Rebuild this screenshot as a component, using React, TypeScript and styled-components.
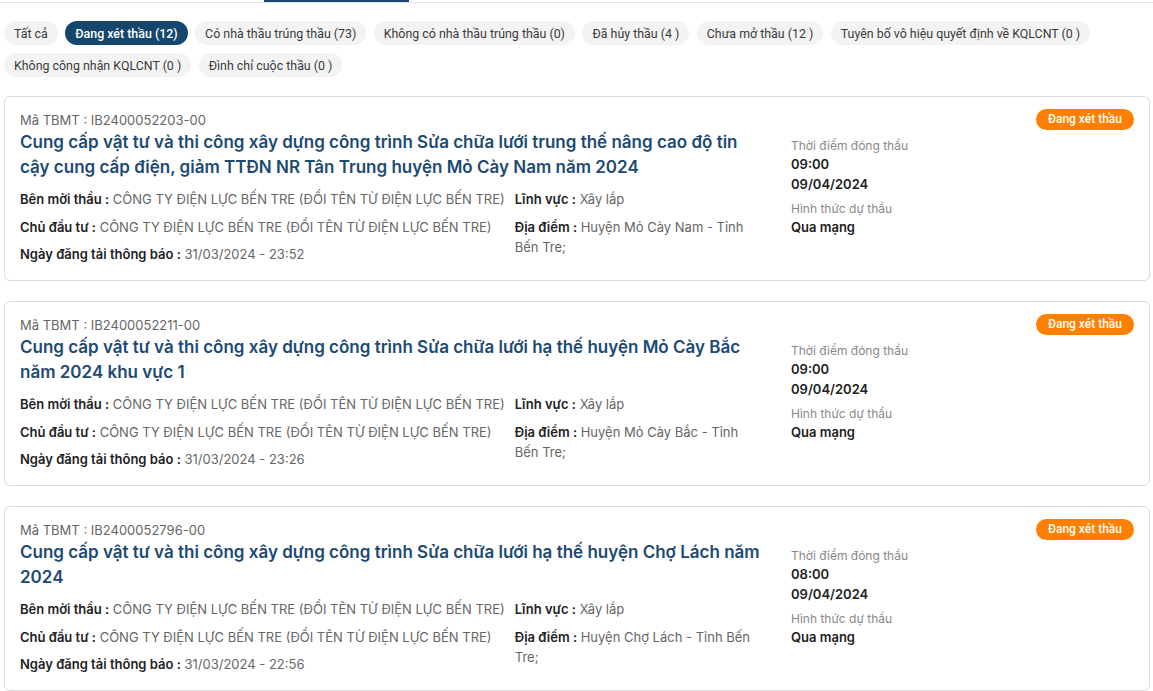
import React from "react";
import styled, { createGlobalStyle } from "styled-components";

const GlobalStyle = createGlobalStyle`
  body {
    margin: 0;
    background: #ffffff;
    font-family: Inter, "Noto Sans", sans-serif;
    color: #222;
  }
`;

type Tender = {
  code: string;
  title: string;
  posted: string;
  place: string;
  closeTime: string;
  closeDate: string;
};

const filters = [
  { label: "Tất cả" },
  { label: "Đang xét thầu (12)", active: true },
  { label: "Có nhà thầu trúng thầu (73)" },
  { label: "Không có nhà thầu trúng thầu (0)" },
  { label: "Đã hủy thầu (4 )" },
  { label: "Chưa mở thầu (12 )" },
  { label: "Tuyên bố vô hiệu quyết định về KQLCNT (0 )" },
  { label: "Không công nhận KQLCNT (0 )" },
  { label: "Đình chỉ cuộc thầu (0 )" },
];

const tenders: Tender[] = [
  {
    code: "IB2400052203-00",
    title:
      "Cung cấp vật tư và thi công xây dựng công trình Sửa chữa lưới trung thế nâng cao độ tin cậy cung cấp điện, giảm TTĐN NR Tân Trung huyện Mỏ Cày Nam năm 2024",
    posted: "31/03/2024 - 23:52",
    place: "Huyện Mỏ Cày Nam - Tỉnh Bến Tre;",
    closeTime: "09:00",
    closeDate: "09/04/2024",
  },
  {
    code: "IB2400052211-00",
    title:
      "Cung cấp vật tư và thi công xây dựng công trình Sửa chữa lưới hạ thế huyện Mỏ Cày Bắc năm 2024 khu vực 1",
    posted: "31/03/2024 - 23:26",
    place: "Huyện Mỏ Cày Bắc - Tỉnh Bến Tre;",
    closeTime: "09:00",
    closeDate: "09/04/2024",
  },
  {
    code: "IB2400052796-00",
    title:
      "Cung cấp vật tư và thi công xây dựng công trình Sửa chữa lưới hạ thế huyện Chợ Lách năm 2024",
    posted: "31/03/2024 - 22:56",
    place: "Huyện Chợ Lách - Tỉnh Bến Tre;",
    closeTime: "08:00",
    closeDate: "09/04/2024",
  },
];

const OWNER = "CÔNG TY ĐIỆN LỰC BẾN TRE (ĐỔI TÊN TỪ ĐIỆN LỰC BẾN TRE)";

const App = () => {
  return (
    <>
      <GlobalStyle />
      <TabStrip>
        <TabUnderline />
      </TabStrip>
      <Page>
        <FilterBar>
          {filters.map((f) => (
            <Chip key={f.label} $active={f.active}>
              {f.label}
            </Chip>
          ))}
        </FilterBar>
        <CardList>
          {tenders.map((t) => (
            <Card key={t.code}>
              <Badge>Đang xét thầu</Badge>
              <Main>
                <Code>Mã TBMT : {t.code}</Code>
                <Title>{t.title}</Title>
                <Fields>
                  <FieldCol>
                    <Field>
                      <Label>Bên mời thầu :</Label> {OWNER}
                    </Field>
                    <Field>
                      <Label>Chủ đầu tư :</Label> {OWNER}
                    </Field>
                    <Field>
                      <Label>Ngày đăng tải thông báo :</Label> {t.posted}
                    </Field>
                  </FieldCol>
                  <FieldCol>
                    <Field>
                      <Label>Lĩnh vực :</Label> Xây lắp
                    </Field>
                    <Field>
                      <Label>Địa điểm :</Label> {t.place}
                    </Field>
                  </FieldCol>
                </Fields>
              </Main>
              <Side>
                <SideLabel>Thời điểm đóng thầu</SideLabel>
                <SideValue>{t.closeTime}</SideValue>
                <SideValue>{t.closeDate}</SideValue>
                <SideLabel $gap>Hình thức dự thầu</SideLabel>
                <SideValue>Qua mạng</SideValue>
              </Side>
            </Card>
          ))}
        </CardList>
      </Page>
    </>
  );
};

const TabStrip = styled.div`
  display: flex;
  height: 2px;
  border-bottom: 1px solid #e2e2e2;
`;

const TabUnderline = styled.div`
  margin-left: 264px;
  width: 145px;
  height: 2px;
  background: #1b466c;
`;

const Page = styled.div`
  padding: 18px 3px 0 4px;
`;

const FilterBar = styled.div`
  display: flex;
  flex-wrap: wrap;
  gap: 8px 7.5px;
`;

const Chip = styled.button<{ $active?: boolean }>`
  height: 24px;
  padding: 0 10px;
  border: none;
  border-radius: 12px;
  font-family: Roboto, "Noto Sans", sans-serif;
  font-size: 12.4px;
  font-weight: ${(p) => (p.$active ? 500 : 400)};
  color: ${(p) => (p.$active ? "#ffffff" : "#3a3a3a")};
  background: ${(p) => (p.$active ? "#15466d" : "#f3f3f3")};
  cursor: pointer;
`;

const CardList = styled.div`
  display: flex;
  flex-direction: column;
  gap: 20px;
  margin-top: 19px;
`;

const Card = styled.div`
  position: relative;
  display: grid;
  grid-template-columns: 745px 1fr;
  column-gap: 26px;
  padding: 13px 15px 16px 15px;
  border: 1px solid #dcdcdc;
  border-radius: 6px;
  background: #fff;
`;

const Badge = styled.span`
  position: absolute;
  top: 12px;
  right: 15px;
  height: 21px;
  line-height: 21px;
  padding: 0 12px;
  border-radius: 11px;
  background: #ff8000;
  color: #fff;
  font-family: Roboto, "Noto Sans", sans-serif;
  font-size: 12px;
  font-weight: 500;
`;

const Main = styled.div`
  display: flex;
  flex-direction: column;
`;

const Code = styled.div`
  font-size: 13px;
  line-height: 20px;
  color: #666;
`;

const Title = styled.div`
  margin-bottom: 9px;
  font-size: 17px;
  line-height: 25px;
  font-weight: 600;
  color: #1c4a72;
`;

const Fields = styled.div`
  display: grid;
  grid-template-columns: max-content 1fr;
  column-gap: 10px;
`;

const FieldCol = styled.div`
  display: flex;
  flex-direction: column;
  gap: 7.5px;
`;

const Field = styled.div`
  font-size: 13px;
  line-height: 20px;
  color: #666;
`;

const Label = styled.span`
  font-weight: 600;
  color: #222;
`;

const Side = styled.div`
  display: flex;
  flex-direction: column;
  padding-top: 27px;
`;

const SideLabel = styled.div<{ $gap?: boolean }>`
  margin-top: ${(p) => (p.$gap ? "6px" : "0")};
  font-size: 12px;
  line-height: 17px;
  color: #888;
`;

const SideValue = styled.div`
  font-size: 13px;
  line-height: 20px;
  font-weight: 600;
  color: #222;
`;

export default App;
